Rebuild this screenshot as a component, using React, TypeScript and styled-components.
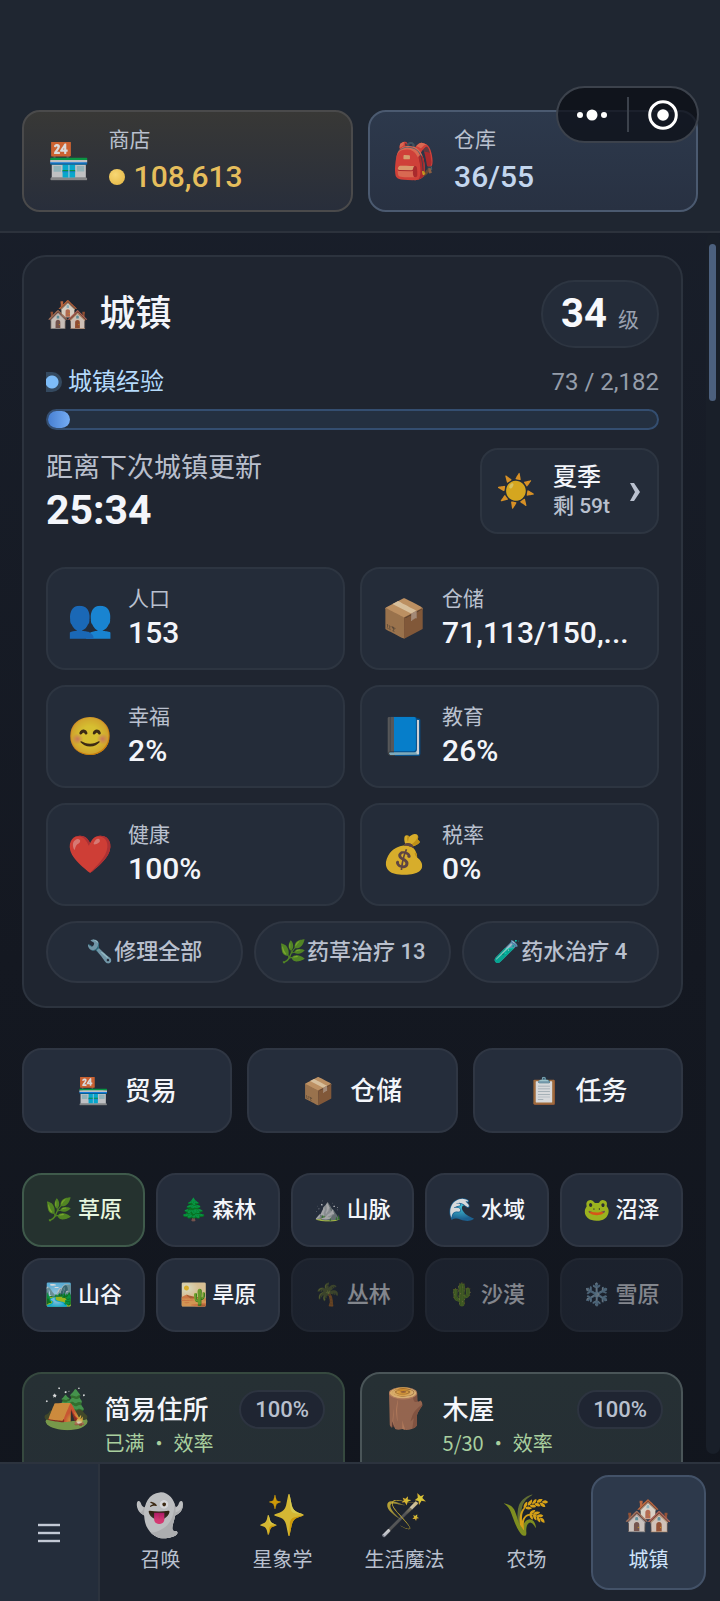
import React from 'react';
import styled, { createGlobalStyle, css } from 'styled-components';

const GlobalStyle = createGlobalStyle`
  * {
    box-sizing: border-box;
  }

  body {
    margin: 0;
    background: #13171f;
    color: #f3f5fa;
    font-family: Roboto, "Noto Sans CJK SC", "Noto Color Emoji", sans-serif;
  }

  button {
    font: inherit;
    color: inherit;
    margin: 0;
    padding: 0;
    cursor: pointer;
  }

  h1, h2, p {
    margin: 0;
    font-weight: 500;
  }
`;

const Screen = styled.div`
  height: 100vh;
  display: flex;
  flex-direction: column;
  background: linear-gradient(#1a202c, #141821 60%, #11151d);
`;

/* ---------- header ---------- */

const Header = styled.header`
  position: relative;
  display: grid;
  grid-template-columns: 1fr 1fr;
  gap: 15px;
  padding: 110px 22px 19px;
  background: #1f2631;
  border-bottom: 2px solid #2c323c;
`;

const HeaderCard = styled.button<{ $tone: 'gold' | 'blue' }>`
  display: flex;
  align-items: center;
  gap: 18px;
  height: 102px;
  padding: 0 23px;
  text-align: left;
  border-radius: 18px;
  border: 2px solid ${(p) => (p.$tone === 'gold' ? '#4a4a4b' : '#4b5a70')};
  background: ${(p) =>
    p.$tone === 'gold'
      ? 'linear-gradient(#383836, #282e3b)'
      : 'linear-gradient(#2d394c, #283142)'};
`;

const Emoji = styled.span<{ $size: number }>`
  flex: none;
  font-family: "Noto Color Emoji", sans-serif;
  font-size: ${(p) => p.$size}px;
  line-height: 1;
  opacity: 0.82;
`;

const Stack = styled.span<{ $gap?: number }>`
  display: flex;
  flex-direction: column;
  min-width: 0;
  gap: ${(p) => p.$gap ?? 0}px;
`;

const Label = styled.span`
  font-size: 21px;
  line-height: 28px;
  color: #b9c0ce;
`;

const Value = styled.span<{ $color?: string }>`
  display: flex;
  align-items: center;
  gap: 9px;
  font-size: 30px;
  line-height: 40px;
  font-weight: 500;
  white-space: nowrap;
  color: ${(p) => p.$color ?? '#f3f5fa'};
`;

const Coin = styled.span`
  width: 16px;
  height: 16px;
  border-radius: 50%;
  background: radial-gradient(circle at 40% 35%, #f7d774, #e3b440);
`;

const Capsule = styled.div`
  position: absolute;
  top: 86px;
  right: 21px;
  display: flex;
  align-items: center;
  width: 143px;
  height: 57px;
  border: 2px solid #3c424c;
  border-radius: 29px;
  background: rgba(12, 15, 22, 0.76);
`;

const CapsuleButton = styled.button`
  flex: 1;
  display: flex;
  align-items: center;
  justify-content: center;
  height: 100%;
  border: none;
  background: none;
`;

const CapsuleDivider = styled.span`
  width: 2px;
  height: 35px;
  background: #3c424c;
`;

/* ---------- scrolling area ---------- */

const Body = styled.div`
  flex: 1;
  min-height: 0;
  display: flex;
  gap: 23px;
  overflow: hidden;
`;

const Content = styled.main`
  flex: 1;
  min-width: 0;
  display: flex;
  flex-direction: column;
  gap: 40px;
  padding: 22px 0 0 22px;
`;

const Rail = styled.div`
  flex: none;
  width: 14px;
  margin-bottom: 8px;
  padding: 11px 4px 0 3px;
  border-radius: 7px;
  background: #191f29;
`;

const Thumb = styled.div`
  height: 13%;
  border-radius: 4px;
  background: #4c607e;
`;

const Panel = styled.section`
  display: flex;
  flex-direction: column;
  padding: 23px 22px;
  border: 2px solid #2c333e;
  border-radius: 24px;
  background: #1f2530;
`;

const Row = styled.div`
  display: flex;
  align-items: center;
  justify-content: space-between;
`;

const Title = styled.h1`
  display: flex;
  align-items: center;
  gap: 10px;
  font-size: 36px;
  line-height: 48px;
`;

const LevelBadge = styled.div`
  display: flex;
  align-items: baseline;
  gap: 11px;
  height: 68px;
  padding: 0 18px;
  border: 2px solid #2d3541;
  border-radius: 34px;
  background: #242c39;
  font-size: 21px;
  line-height: 64px;
  color: #99a1b0;

  strong {
    font-size: 40px;
    color: #f8f9fc;
  }
`;

const ExpRow = styled(Row)`
  margin-top: 18px;
  font-size: 24px;
  line-height: 32px;
  color: #959daa;
`;

const ExpLabel = styled.span`
  display: flex;
  align-items: center;
  gap: 6px;
  color: #b4dafb;
`;

const ExpDot = styled.span`
  width: 16px;
  height: 20px;
  border-radius: 0 10px 10px 0;
  background: radial-gradient(circle at 6px 50%, #7dbcf8 6px, #34495f 7px);
`;

const ExpTrack = styled.div`
  height: 21px;
  margin-top: 11px;
  border: 2px solid #344e70;
  border-radius: 11px;
  background: #243040;
`;

const ExpFill = styled.div`
  height: 100%;
  min-width: 22px;
  border-radius: 9px;
  background: linear-gradient(90deg, #477fd2, #75adf4);
`;

const TimerRow = styled(Row)`
  margin-top: 18px;
`;

const TimerLabel = styled.span`
  font-size: 27px;
  line-height: 38px;
  color: #b9bfcc;
`;

const TimerValue = styled.strong`
  font-size: 41px;
  line-height: 46px;
`;

const SeasonButton = styled.button`
  display: flex;
  align-items: center;
  gap: 17px;
  height: 86px;
  padding: 0 14px;
  text-align: left;
  border: 2px solid #2d3541;
  border-radius: 18px;
  background: #242c39;
`;

const SeasonName = styled.span`
  font-size: 24px;
  line-height: 30px;
  font-weight: 500;
`;

const SeasonLeft = styled.span`
  font-size: 21px;
  line-height: 28px;
  font-weight: 500;
  color: #b9c0ce;
`;

const StatGrid = styled.div`
  display: grid;
  grid-template-columns: 1fr 1fr;
  gap: 15px;
  margin-top: 33px;
`;

const StatCard = styled.div`
  display: flex;
  align-items: center;
  gap: 15px;
  height: 103px;
  padding: 0 19px;
  border: 2px solid #2d3541;
  border-radius: 20px;
  background: #242c39;
`;

const ActionRow = styled.div`
  display: grid;
  grid-template-columns: repeat(3, 1fr);
  gap: 11px;
  margin-top: 15px;
`;

const ActionButton = styled.button`
  display: flex;
  align-items: center;
  justify-content: center;
  height: 62px;
  border: 2px solid #2f3642;
  border-radius: 31px;
  background: #242c39;
  font-size: 22px;
  line-height: 28px;
  font-weight: 500;
  white-space: pre;
  color: #b9c0ce;
`;

const ShortcutRow = styled.div`
  display: grid;
  grid-template-columns: repeat(3, 1fr);
  gap: 15px;
`;

const tile = css`
  display: flex;
  align-items: center;
  justify-content: center;
  border: 2px solid #2f3643;
  border-radius: 20px;
  background: #252d3b;
  line-height: 28px;
  font-weight: 500;
`;

const Shortcut = styled.button`
  ${tile}
  gap: 15px;
  height: 85px;
  font-size: 26px;
`;

const RegionGrid = styled.div`
  display: grid;
  grid-template-columns: repeat(5, 1fr);
  gap: 11px;
`;

const Region = styled.button<{ $active?: boolean }>`
  ${tile}
  gap: 5px;
  height: 74px;
  font-size: 22px;

  ${(p) =>
    p.$active &&
    css`
      border-color: #3f5a4b;
      background: #25322f;
      color: #e6f6df;
    `}

  &:disabled {
    opacity: 0.5;
    cursor: default;
  }
`;

const BuildingGrid = styled.div`
  display: grid;
  grid-template-columns: 1fr 1fr;
  gap: 15px;
`;

const Building = styled.article<{ $border: string }>`
  display: flex;
  align-items: flex-start;
  gap: 14px;
  height: 190px;
  padding: 16px 18px;
  border: 2px solid ${(p) => p.$border};
  border-radius: 20px;
  background: linear-gradient(#263034, #252e35);
`;

const BuildingText = styled(Stack)`
  flex: 1;
`;

const BuildingName = styled.h2`
  font-size: 26px;
  line-height: 38px;
`;

const BuildingInfo = styled.p`
  font-family: "Noto Sans CJK SC", sans-serif;
  font-size: 20px;
  line-height: 28px;
  font-weight: 400;
  color: #a9cf9f;
`;

const Percent = styled.span`
  padding: 0 14px;
  border: 2px solid #2d3440;
  border-radius: 20px;
  background: #1f2532;
  font-size: 22px;
  line-height: 35px;
  font-weight: 500;
  color: #b9c0ce;
`;

/* ---------- bottom navigation ---------- */

const BottomNav = styled.nav`
  flex: none;
  display: flex;
  height: 139px;
  border-top: 2px solid #2c333e;
  background: #1d232e;
`;

const MenuButton = styled.button`
  flex: none;
  width: 100px;
  padding-top: 4px;
  border: none;
  border-right: 2px solid #2c333e;
  background: #242d3b;
`;

const Tabs = styled.div`
  flex: 1;
  display: grid;
  grid-template-columns: repeat(5, 1fr);
  gap: 7px;
  padding: 11px 14px 11px 3px;
`;

const Tab = styled.button<{ $active?: boolean }>`
  display: flex;
  flex-direction: column;
  align-items: center;
  justify-content: center;
  gap: 10px;
  padding-top: 5px;
  border: 2px solid ${(p) => (p.$active ? '#435268' : 'transparent')};
  border-radius: 18px;
  background: ${(p) => (p.$active ? '#2d394b' : 'transparent')};
  color: ${(p) => (p.$active ? '#cfe4fb' : '#b9c0ce')};
  font-size: 20px;
  line-height: 28px;
  white-space: nowrap;
`;

const stats = [
  { icon: '👥', label: '人口', value: '153' },
  { icon: '📦', label: '仓储', value: '71,113/150,...' },
  { icon: '😊', label: '幸福', value: '2%' },
  { icon: '📘', label: '教育', value: '26%' },
  { icon: '❤️', label: '健康', value: '100%' },
  { icon: '💰', label: '税率', value: '0%' },
];

const actions = [
  { icon: '🔧', text: '修理全部' },
  { icon: '🌿', text: '药草治疗 13' },
  { icon: '🧪', text: '药水治疗 4' },
];

const shortcuts = [
  { icon: '🏪', text: '贸易' },
  { icon: '📦', text: '仓储' },
  { icon: '📋', text: '任务' },
];

const regions = [
  { icon: '🌿', text: '草原', active: true },
  { icon: '🌲', text: '森林' },
  { icon: '⛰️', text: '山脉' },
  { icon: '🌊', text: '水域' },
  { icon: '🐸', text: '沼泽' },
  { icon: '🏞️', text: '山谷' },
  { icon: '🏜️', text: '旱原' },
  { icon: '🌴', text: '丛林', locked: true },
  { icon: '🌵', text: '沙漠', locked: true },
  { icon: '❄️', text: '雪原', locked: true },
];

const buildings = [
  { icon: '🏕️', name: '简易住所', info: '已满 · 效率', percent: '100%', border: '#36493f' },
  { icon: '🪵', name: '木屋', info: '5/30 · 效率', percent: '100%', border: '#4a5558' },
];

const tabs = [
  { icon: '👻', text: '召唤' },
  { icon: '✨', text: '星象学' },
  { icon: '🪄', text: '生活魔法' },
  { icon: '🌾', text: '农场' },
  { icon: '🏘️', text: '城镇', active: true },
];

const exp = { current: 73, total: 2182 };

const App: React.FC = () => (
  <>
    <GlobalStyle />
    <Screen>
      <Header>
        <HeaderCard $tone="gold">
          <Emoji $size={35}>🏪</Emoji>
          <Stack $gap={3}>
            <Label>商店</Label>
            <Value $color="#e6be5c">
              <Coin />
              108,613
            </Value>
          </Stack>
        </HeaderCard>
        <HeaderCard $tone="blue">
          <Emoji $size={35}>🎒</Emoji>
          <Stack $gap={3}>
            <Label>仓库</Label>
            <Value $color="#c3d6ee">36/55</Value>
          </Stack>
        </HeaderCard>
        <Capsule>
          <CapsuleButton aria-label="更多">
            <svg width="32" height="12" viewBox="0 0 32 12" fill="#fff">
              <circle cx="4" cy="6" r="3" />
              <circle cx="16" cy="6" r="5.5" />
              <circle cx="28" cy="6" r="3" />
            </svg>
          </CapsuleButton>
          <CapsuleDivider />
          <CapsuleButton aria-label="关闭">
            <svg width="30" height="30" viewBox="0 0 30 30">
              <circle cx="15" cy="15" r="13.3" fill="none" stroke="#fff" strokeWidth="3" />
              <circle cx="15" cy="15" r="5.8" fill="#fff" />
            </svg>
          </CapsuleButton>
        </Capsule>
      </Header>

      <Body>
        <Content>
          <Panel>
            <Row>
              <Title>
                <Emoji $size={35}>🏘️</Emoji>
                城镇
              </Title>
              <LevelBadge>
                <strong>34</strong>级
              </LevelBadge>
            </Row>
            <ExpRow>
              <ExpLabel>
                <ExpDot />
                城镇经验
              </ExpLabel>
              <span>73 / 2,182</span>
            </ExpRow>
            <ExpTrack
              role="progressbar"
              aria-label="城镇经验"
              aria-valuenow={exp.current}
              aria-valuemax={exp.total}
            >
              <ExpFill style={{ width: `${(exp.current / exp.total) * 100}%` }} />
            </ExpTrack>
            <TimerRow>
              <Stack>
                <TimerLabel>距离下次城镇更新</TimerLabel>
                <TimerValue>25:34</TimerValue>
              </Stack>
              <SeasonButton>
                <Emoji $size={32}>☀️</Emoji>
                <Stack>
                  <SeasonName>夏季</SeasonName>
                  <SeasonLeft>剩 59t</SeasonLeft>
                </Stack>
                <svg width="16" height="22" viewBox="0 0 16 22" fill="#b9c0ce">
                  <path d="M3 3h4l6 9-6 9H3l5-9z" />
                </svg>
              </SeasonButton>
            </TimerRow>
            <StatGrid>
              {stats.map((s) => (
                <StatCard key={s.label}>
                  <Emoji $size={37}>{s.icon}</Emoji>
                  <Stack>
                    <Label>{s.label}</Label>
                    <Value>{s.value}</Value>
                  </Stack>
                </StatCard>
              ))}
            </StatGrid>
            <ActionRow>
              {actions.map((a) => (
                <ActionButton key={a.text}>
                  <Emoji $size={22}>{a.icon}</Emoji>
                  {a.text}
                </ActionButton>
              ))}
            </ActionRow>
          </Panel>

          <ShortcutRow>
            {shortcuts.map((s) => (
              <Shortcut key={s.text}>
                <Emoji $size={26}>{s.icon}</Emoji>
                {s.text}
              </Shortcut>
            ))}
          </ShortcutRow>

          <RegionGrid>
            {regions.map((r) => (
              <Region key={r.text} $active={r.active} disabled={r.locked}>
                <Emoji $size={22}>{r.icon}</Emoji>
                {r.text}
              </Region>
            ))}
          </RegionGrid>

          <BuildingGrid>
            {buildings.map((b) => (
              <Building key={b.name} $border={b.border}>
                <Emoji $size={39}>{b.icon}</Emoji>
                <BuildingText>
                  <Row>
                    <BuildingName>{b.name}</BuildingName>
                    <Percent>{b.percent}</Percent>
                  </Row>
                  <BuildingInfo>{b.info}</BuildingInfo>
                </BuildingText>
              </Building>
            ))}
          </BuildingGrid>
        </Content>
        <Rail>
          <Thumb />
        </Rail>
      </Body>

      <BottomNav>
        <MenuButton aria-label="菜单">
          <svg width="22" height="20" viewBox="0 0 22 20" fill="#c3c9d5">
            <rect width="22" height="2.4" y="0.8" />
            <rect width="22" height="2.4" y="8.8" />
            <rect width="22" height="2.4" y="16.8" />
          </svg>
        </MenuButton>
        <Tabs>
          {tabs.map((t) => (
            <Tab key={t.text} $active={t.active}>
              <Emoji $size={40}>{t.icon}</Emoji>
              {t.text}
            </Tab>
          ))}
        </Tabs>
      </BottomNav>
    </Screen>
  </>
);

export default App;
